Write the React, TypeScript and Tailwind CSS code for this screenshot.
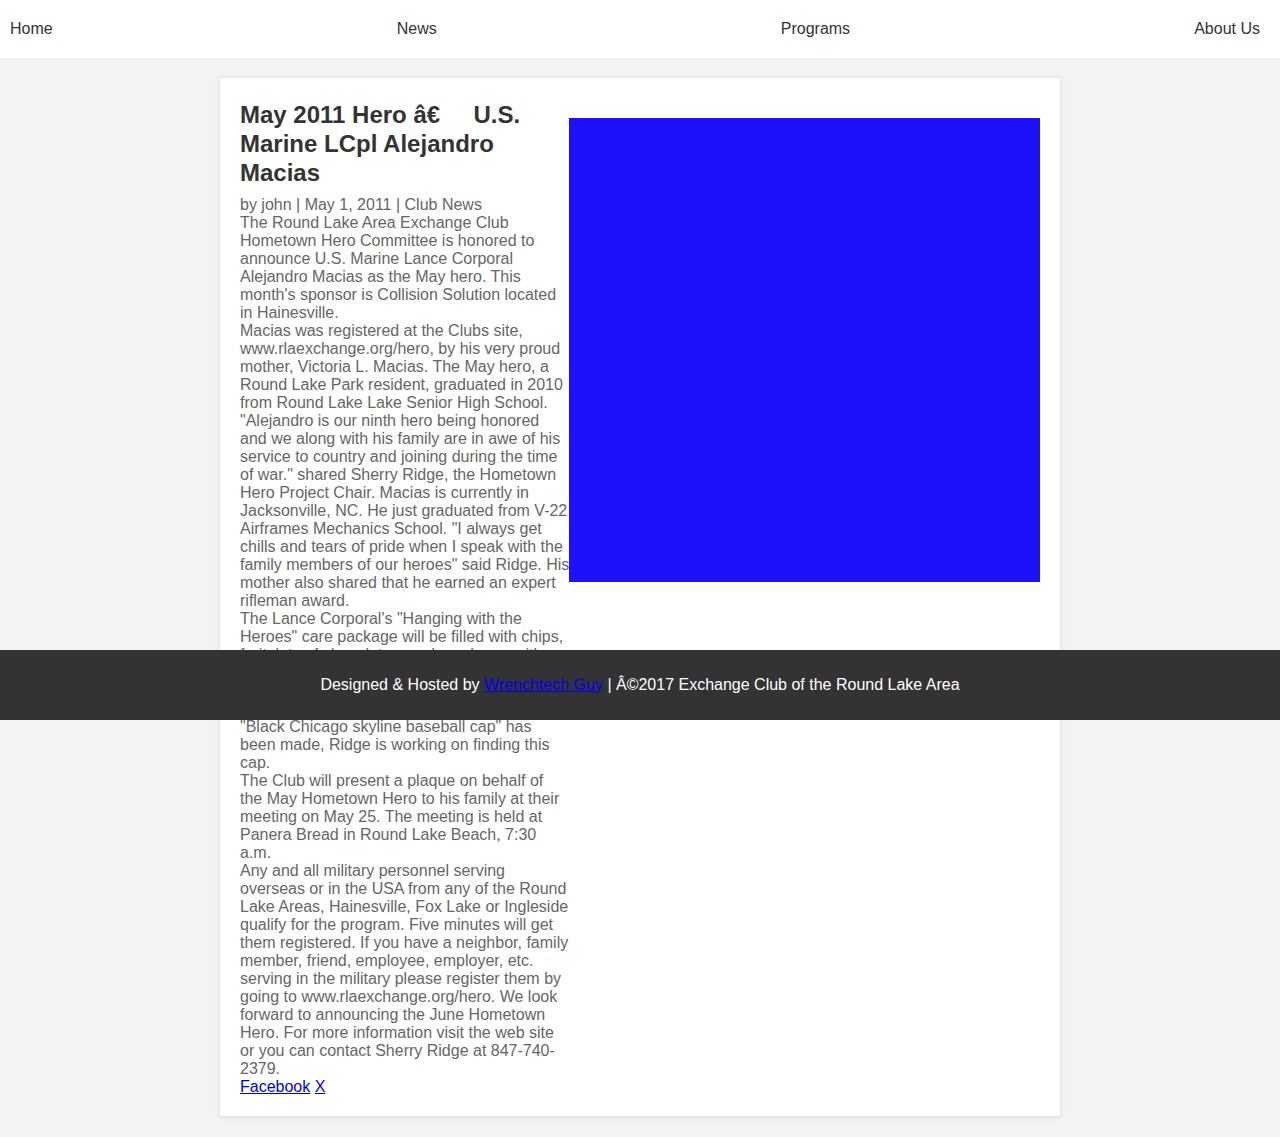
export default function App() {
  const navItems = ['Home', 'News', 'Programs', 'About Us'];

  return (
    <div className="min-h-screen bg-[#f3f3f3] font-['Liberation_Sans',Arial,sans-serif] relative">
      {/* Top nav */}
      <nav className="h-[58px] bg-white flex items-center justify-between pr-[10px]">
        {navItems.map((item) => (
          <a key={item} href="#" className="px-[10px] text-[16px] text-[#333] leading-[18px]">
            {item}
          </a>
        ))}
      </nav>

      {/* Post card */}
      <main className="py-[20px]">
        <article className="w-[840px] mx-auto bg-white shadow-[0_1px_5px_rgba(0,0,0,0.12)] p-[20px] flex">
          <div className="w-[329px] shrink-0">
            <h1 className="text-[24px] font-bold leading-[29px] text-[#333] mt-[2px] mb-[9px]">
              May 2011 Hero â€{'\u00a0\u00a0\u00a0\u00a0'} U.S. Marine LCpl Alejandro Macias
            </h1>
            <div className="text-[16px] leading-[18px] text-[#666]">
              <div>by john | May 1, 2011 | Club News</div>
              <div>
                The Round Lake Area Exchange Club Hometown Hero Committee is honored to announce U.S.
                Marine Lance Corporal Alejandro Macias as the May hero. This month's sponsor is
                Collision Solution located in Hainesville.
              </div>
              <div>
                Macias was registered at the Clubs site, www.rlaexchange.org/hero, by his very proud
                mother, Victoria L. Macias. The May hero, a Round Lake Park resident, graduated in 2010
                from Round Lake Lake Senior High School.
              </div>
              <div>
                "Alejandro is our ninth hero being honored and we along with his family are in awe of
                his service to country and joining during the time of war." shared Sherry Ridge, the
                Hometown Hero Project Chair. Macias is currently in Jacksonville, NC. He just graduated
                from V-22 Airframes Mechanics School. "I always get chills and tears of pride when I
                speak with the{' '}
                <span className="whitespace-nowrap">family members of our heroes" said Ridge. His</span>{' '}
                mother also shared that he earned an expert rifleman award.
              </div>
              <div>
                The Lance Corporal's "Hanging with the Heroes" care package will be filled with chips,
                fruit, lots of chocolate, candy and gum with some toiletries, magazines, socks, beef
                jerky and a few DVDs for the long evenings away from home. A special request for a
                <br />
                "Black Chicago skyline baseball cap" has been made, Ridge is working on finding this
                cap.
              </div>
              <div>
                The Club will present a plaque on behalf of the May Hometown Hero to his family at their
                meeting on May 25. The meeting is held at Panera Bread in Round Lake Beach, 7:30 a.m.
              </div>
              <div>
                Any and all military personnel serving overseas or in the USA from any of the Round Lake
                Areas, Hainesville, Fox Lake or Ingleside qualify for the program. Five minutes will get
                them registered. If you have a neighbor, family member, friend, employee, employer, etc.
                serving in the military please register them by going to www.rlaexchange.org/hero. We
                look forward to announcing the June Hometown Hero. For more information visit the web
                site or you can contact Sherry Ridge at 847-740-2379.
              </div>
              <div>
                <a href="#" className="text-[#0000ee] underline">
                  Facebook
                </a>{' '}
                <a href="#" className="text-[#0000ee] underline">
                  X
                </a>
              </div>
            </div>
          </div>

          {/* Hero image placeholder */}
          <div className="w-[471px] h-[464px] mt-[20px] bg-[#1e10f8] shrink-0" />
        </article>
      </main>

      {/* Footer bar (sits over the page) */}
      <footer className="absolute left-0 right-0 top-[650px] h-[70px] bg-[#333] flex items-center justify-center text-white text-[16px] leading-[18px]">
        <span>
          Designed &amp; Hosted by{' '}
          <a href="#" className="text-[#0000ee] underline">
            Wrenchtech Guy
          </a>{' '}
          | Â©2017 Exchange Club of the Round Lake Area
        </span>
      </footer>
    </div>
  );
}
